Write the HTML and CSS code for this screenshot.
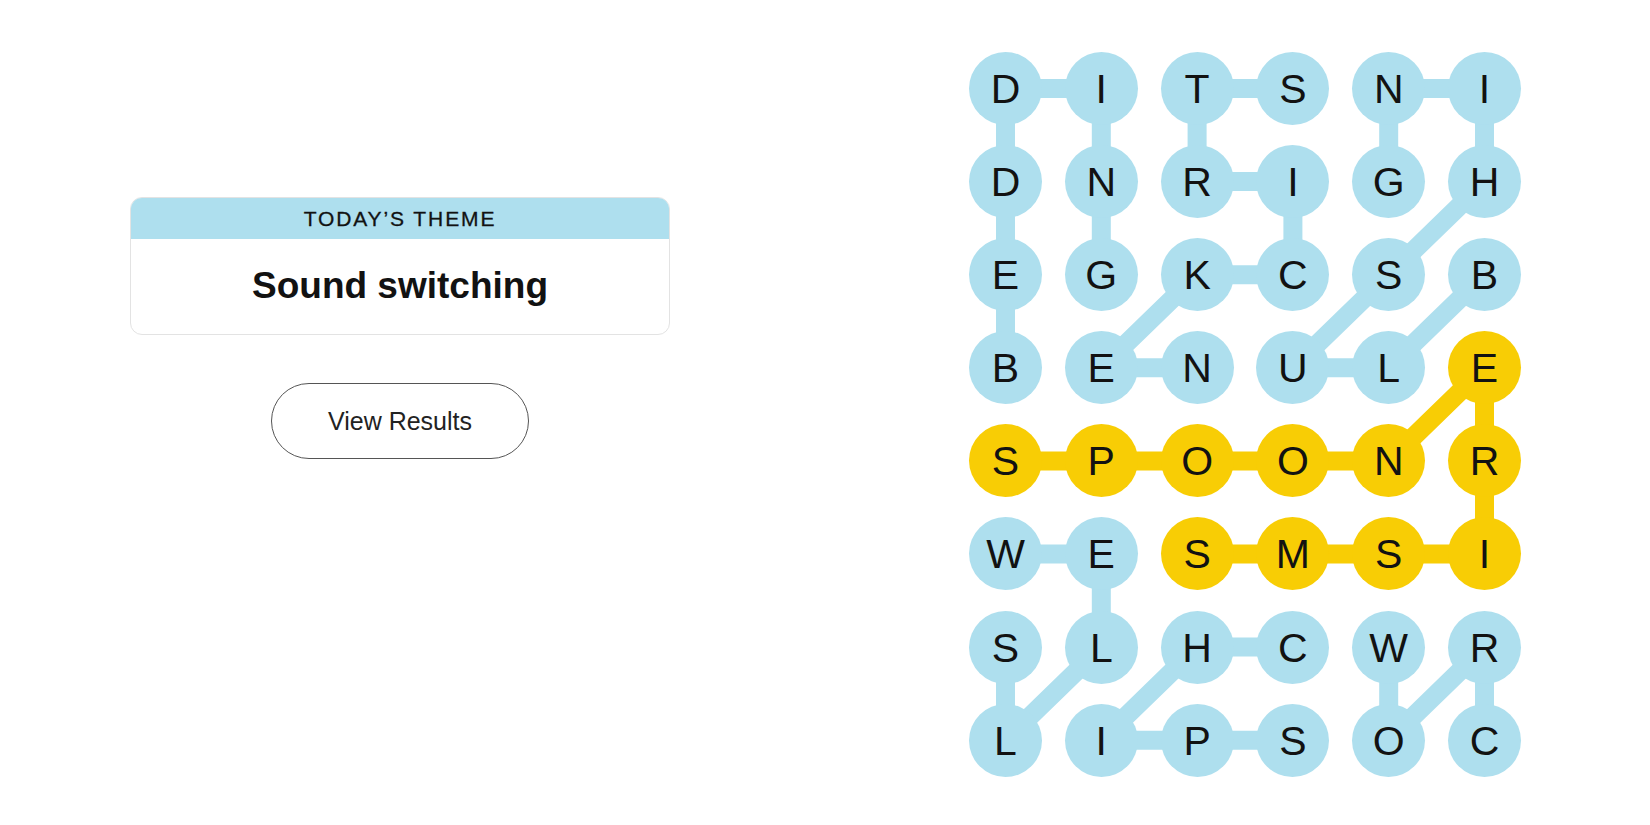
FILE: index.html
```html
<!DOCTYPE html>
<html lang="en">
<head>
<meta charset="utf-8">
<title>Strands</title>
<link rel="stylesheet" href="styles.css">
</head>
<body>
<main class="page">
  <section class="left">
    <div class="theme-card">
      <div class="theme-head">TODAY’S THEME</div>
      <div class="theme-body">Sound switching</div>
    </div>
    <button class="results-btn">View Results</button>
  </section>

  <section class="board">
    <svg class="links" width="552" height="725" viewBox="0 0 552 725" aria-hidden="true">
      <g fill="none" stroke="#aedfee" stroke-width="19" stroke-linejoin="round">
        <polyline points="36.5,315.8 36.5,222.7 36.5,129.6 36.5,36.5 132.3,36.5 132.3,129.6 132.3,222.7"/>
        <polyline points="323.9,36.5 228.1,36.5 228.1,129.6 323.9,129.6 323.9,222.7 228.1,222.7 132.3,315.8 228.1,315.8"/>
        <polyline points="515.5,222.7 419.7,315.8 323.9,315.8 419.7,222.7 515.5,129.6 515.5,36.5 419.7,36.5 419.7,129.6"/>
        <polyline points="36.5,502 132.3,502 132.3,595.1 36.5,688.2 36.5,595.1"/>
        <polyline points="323.9,595.1 228.1,595.1 132.3,688.2 228.1,688.2 323.9,688.2"/>
        <polyline points="515.5,688.2 515.5,595.1 419.7,688.2 419.7,595.1"/>
      </g>
      <polyline fill="none" stroke="#f8cd05" stroke-width="19" stroke-linejoin="round" points="36.5,408.9 132.3,408.9 228.1,408.9 323.9,408.9 419.7,408.9 515.5,315.8 515.5,408.9 515.5,502 419.7,502 323.9,502 228.1,502"/>
    </svg>
    <div class="grid">
      <span class="cell">D</span><span class="cell">I</span><span class="cell">T</span><span class="cell">S</span><span class="cell">N</span><span class="cell">I</span>
      <span class="cell">D</span><span class="cell">N</span><span class="cell">R</span><span class="cell">I</span><span class="cell">G</span><span class="cell">H</span>
      <span class="cell">E</span><span class="cell">G</span><span class="cell">K</span><span class="cell">C</span><span class="cell">S</span><span class="cell">B</span>
      <span class="cell">B</span><span class="cell">E</span><span class="cell">N</span><span class="cell">U</span><span class="cell">L</span><span class="cell span">E</span>
      <span class="cell span">S</span><span class="cell span">P</span><span class="cell span">O</span><span class="cell span">O</span><span class="cell span">N</span><span class="cell span">R</span>
      <span class="cell">W</span><span class="cell">E</span><span class="cell span">S</span><span class="cell span">M</span><span class="cell span">S</span><span class="cell span">I</span>
      <span class="cell">S</span><span class="cell">L</span><span class="cell">H</span><span class="cell">C</span><span class="cell">W</span><span class="cell">R</span>
      <span class="cell">L</span><span class="cell">I</span><span class="cell">P</span><span class="cell">S</span><span class="cell">O</span><span class="cell">C</span>
    </div>
  </section>
</main>
</body>
</html>
```

FILE: styles.css
```css
* { box-sizing: border-box; }

html, body {
  margin: 0;
  padding: 0;
  background: #ffffff;
  font-family: "Liberation Sans", Arial, sans-serif;
  color: #121212;
}

.page {
  display: flex;
  align-items: flex-start;
  padding-left: 130px;
  width: 1650px;
  height: 825px;
  overflow: hidden;
}

.left {
  width: 540px;
  margin-top: 197px;
  display: flex;
  flex-direction: column;
  align-items: center;
}

.theme-card {
  width: 540px;
  height: 138px;
  border: 1px solid #e3e3e3;
  border-radius: 12px;
  overflow: hidden;
  display: flex;
  flex-direction: column;
}

.theme-head {
  height: 41px;
  background: #aedfee;
  display: flex;
  align-items: center;
  justify-content: center;
  font-size: 21px;
  letter-spacing: 1.9px;
  color: #121212;
  padding-top: 1px;
  -webkit-text-stroke: 0.3px #121212;
}

.theme-body {
  flex: 1;
  display: flex;
  align-items: center;
  justify-content: center;
  font-size: 37px;
  font-weight: 700;
  color: #121212;
  padding-bottom: 2px;
}

.results-btn {
  margin-top: 48px;
  width: 258px;
  height: 76px;
  border: 1px solid #555555;
  border-radius: 38px;
  background: #ffffff;
  font-family: "Liberation Sans", Arial, sans-serif;
  font-size: 25px;
  color: #222222;
  padding: 0;
}

.board {
  position: relative;
  margin-left: 299px;
  margin-top: 52px;
  width: 552px;
  height: 725px;
}

.links {
  position: absolute;
  left: 0;
  top: 0;
}

.grid {
  position: relative;
  display: grid;
  grid-template-columns: repeat(6, 73px);
  grid-auto-rows: 73px;
  column-gap: 22.8px;
  row-gap: 20.1px;
}

.cell {
  width: 73px;
  height: 73px;
  border-radius: 50%;
  background: #aedfee;
  display: flex;
  align-items: center;
  justify-content: center;
  font-size: 41px;
  color: #121212;
  line-height: 1;
  padding-top: 2px;
}

.cell.span {
  background: #f8cd05;
}
```
